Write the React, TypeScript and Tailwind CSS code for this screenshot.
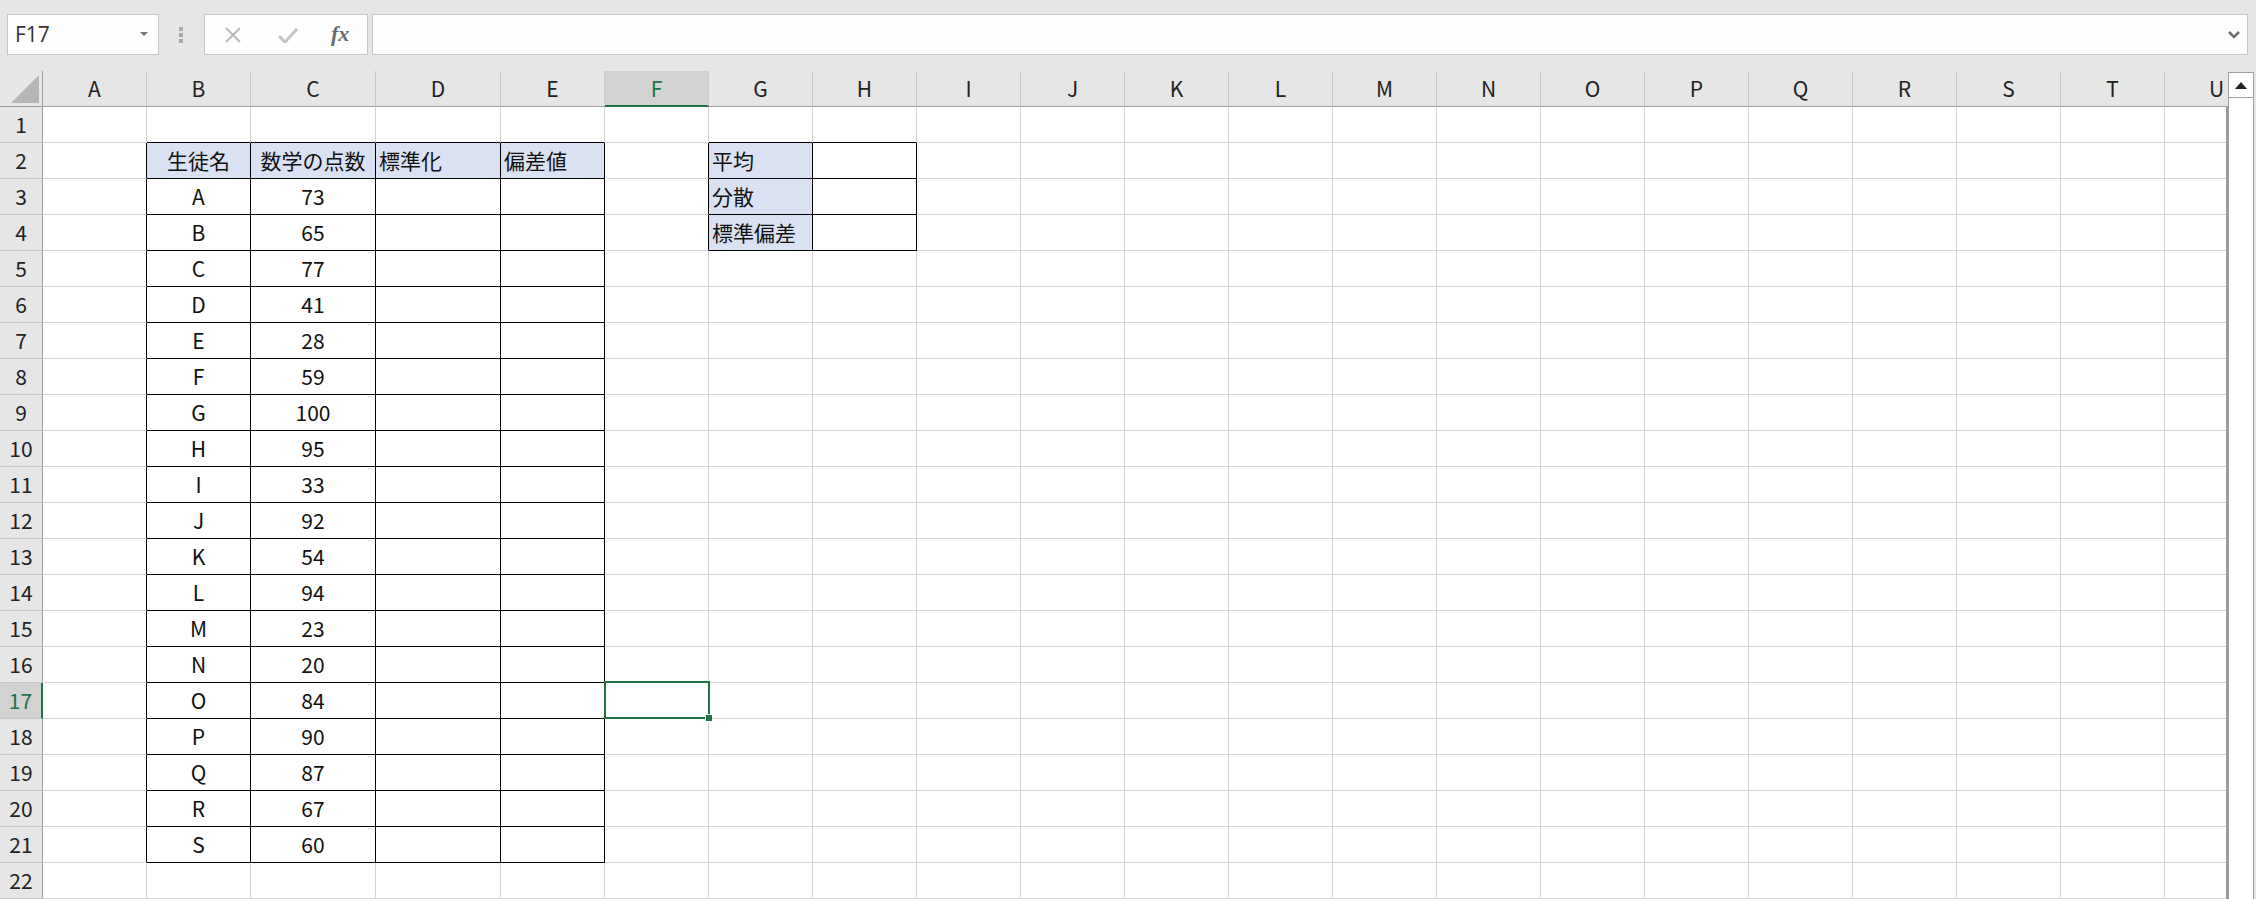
import React from 'react';

const COLS = ['A', 'B', 'C', 'D', 'E', 'F', 'G', 'H', 'I', 'J', 'K', 'L', 'M', 'N', 'O', 'P', 'Q', 'R', 'S', 'T', 'U'];
const WIDE = [2, 3]; // C, D
const SEL_COL = 5; // F
const SEL_ROW = 17;

const students = ['A', 'B', 'C', 'D', 'E', 'F', 'G', 'H', 'I', 'J', 'K', 'L', 'M', 'N', 'O', 'P', 'Q', 'R', 'S'];
const scores = [73, 65, 77, 41, 28, 59, 100, 95, 33, 92, 54, 94, 23, 20, 84, 90, 87, 67, 60];

type Cell = { text: string; align: 'left' | 'center'; fill?: boolean };

const cells: Record<string, Cell> = {
  '2-1': { text: '生徒名', align: 'center', fill: true },
  '2-2': { text: '数学の点数', align: 'center', fill: true },
  '2-3': { text: '標準化', align: 'left', fill: true },
  '2-4': { text: '偏差値', align: 'left', fill: true },
  '2-6': { text: '平均', align: 'left', fill: true },
  '3-6': { text: '分散', align: 'left', fill: true },
  '4-6': { text: '標準偏差', align: 'left', fill: true },
};
students.forEach((s, i) => {
  cells[`${i + 3}-1`] = { text: s, align: 'center' };
  cells[`${i + 3}-2`] = { text: String(scores[i]), align: 'center' };
});

const inTable = (r: number, c: number) =>
  (c >= 1 && c <= 4 && r >= 2 && r <= 21) || (c >= 6 && c <= 7 && r >= 2 && r <= 4);

const font = { fontFamily: '"Noto Sans CJK JP", "Noto Sans", sans-serif' };

function ColHeader() {
  return (
    <div className="flex h-[36px] w-[2228px] overflow-hidden bg-[#e6e6e6]">
      <div className="w-[43px] h-[36px] shrink-0 border-r border-b border-[#9f9f9f] bg-[#e6e6e6] flex items-end justify-end pr-[3px] pb-[3px]">
        <svg width="28" height="28" viewBox="0 0 28 28">
          <polygon points="28,0 28,28 0,28" fill="#b5b5b5" />
        </svg>
      </div>
      {COLS.map((c, i) => {
        const sel = i === SEL_COL;
        return (
          <div
            key={c}
            className={`${WIDE.includes(i) ? 'w-[125px]' : 'w-[104px]'} h-[36px] shrink-0 box-border border-r border-r-[#c8c8c8] flex items-center justify-center text-[21px] leading-none ${
              sel
                ? 'bg-[#d2d2d2] text-[#217346] border-b-2 border-b-[#217346]'
                : 'text-[#222] border-b border-b-[#9f9f9f]'
            }`}
          >
            {c}
          </div>
        );
      })}
    </div>
  );
}

function Row({ r }: { r: number }) {
  const selRow = r === SEL_ROW;
  return (
    <div className="flex h-[36px]">
      <div
        className={`w-[43px] h-[36px] shrink-0 border-b border-b-[#c8c8c8] flex items-center justify-center text-[21px] leading-none ${
          selRow
            ? 'bg-[#d2d2d2] text-[#217346] border-r-2 border-r-[#217346]'
            : 'bg-[#e6e6e6] text-[#222] border-r border-r-[#9f9f9f]'
        }`}
      >
        {r}
      </div>
      {COLS.map((c, i) => {
        const cell = cells[`${r}-${i}`];
        const rightBlack = inTable(r, i) || inTable(r, i + 1);
        const bottomBlack = inTable(r, i) || inTable(r + 1, i);
        const isSel = selRow && i === SEL_COL;
        return (
          <div
            key={c}
            className={`relative ${WIDE.includes(i) ? 'w-[125px]' : 'w-[104px]'} h-[36px] shrink-0 border-r border-b flex items-center text-[21px] leading-none text-[#111] whitespace-nowrap ${
              rightBlack ? 'border-r-black' : 'border-r-[#d4d4d4]'
            } ${bottomBlack ? 'border-b-black' : 'border-b-[#d4d4d4]'} ${
              cell?.fill ? 'bg-[#d9e1f2]' : 'bg-white'
            } ${cell?.align === 'left' ? 'justify-start pl-[3px]' : 'justify-center'}`}
          >
            {cell && <span>{cell.text}</span>}
            {isSel && (
              <div className="absolute -left-px -top-[2px] -right-[2px] -bottom-[1px] border-2 border-[#217346] z-10">
                <div className="absolute -right-[5px] -bottom-[5px] w-[8px] h-[8px] bg-[#217346] border border-white" />
              </div>
            )}
          </div>
        );
      })}
    </div>
  );
}

export default function App() {
  const rows = Array.from({ length: 22 }, (_, i) => i + 1);
  return (
    <div className="w-[2256px] h-[899px] overflow-hidden bg-[#e6e6e6] select-none" style={font}>
      {/* formula bar */}
      <div className="h-[71px] flex items-start pt-[14px] pl-[7px] pr-[8px]">
        <div className="w-[152px] h-[41px] bg-[#fefefe] border border-[#c6c6c6] flex items-center justify-between pl-[7px] pr-[10px]">
          <span className="text-[21px] text-[#333] leading-none" style={{ fontFamily: '"Open Sans", "Noto Sans", sans-serif' }}>
            F17
          </span>
          <svg width="8" height="5" viewBox="0 0 8 5">
            <polygon points="0,0 8,0 4,4" fill="#777" />
          </svg>
        </div>
        <div className="w-[45px] h-[41px] flex flex-col items-center justify-center gap-[2px] pr-[2px]">
          <div className="w-[4px] h-[4px] bg-[#a8a8a8]" />
          <div className="w-[4px] h-[4px] bg-[#a8a8a8]" />
          <div className="w-[4px] h-[4px] bg-[#a8a8a8]" />
        </div>
        <div className="w-[164px] h-[41px] bg-[#fefefe] border border-[#c6c6c6] flex items-center pl-[18px]">
          <svg width="18" height="16" viewBox="0 0 18 16" className="ml-[1px]">
            <path d="M2 1 L16 15 M16 1 L2 15" stroke="#b8b8b8" strokeWidth="1.8" fill="none" />
          </svg>
          <svg width="20" height="16" viewBox="0 0 20 16" className="ml-[36px]">
            <path d="M1 9 L7 15 L19 2" stroke="#c4c4c4" strokeWidth="3" fill="none" />
          </svg>
          <span
            className="ml-[33px] text-[22px] italic font-bold text-[#6a6a6a] leading-none pb-[2px]"
            style={{ fontFamily: '"Liberation Serif", "DejaVu Serif", serif' }}
          >
            fx
          </span>
        </div>
        <div className="ml-[4px] flex-1 h-[41px] bg-[#fefefe] border border-[#c6c6c6] flex items-center justify-end pr-[7px]">
          <svg width="12" height="8" viewBox="0 0 12 8">
            <path d="M1 1 L6 6 L11 1" stroke="#707070" strokeWidth="2.6" fill="none" />
          </svg>
        </div>
      </div>

      {/* sheet + scrollbar */}
      <div className="flex">
        <div className="w-[2228px] shrink-0">
          <ColHeader />
          <div className="w-[2228px] h-[792px] overflow-hidden border-r-2 border-[#9a9a9a] bg-white">
            {rows.map((r) => (
              <Row key={r} r={r} />
            ))}
          </div>
        </div>
        <div className="w-[26px] shrink-0 pt-[1px] flex flex-col">
          <div className="h-[26px] bg-white border border-[#a0a0a0] flex items-center justify-center">
            <svg width="12" height="7" viewBox="0 0 12 7">
              <polygon points="0,7 12,7 6,0" fill="#222" />
            </svg>
          </div>
          <div className="flex-1 h-[802px] bg-white border-x border-[#a0a0a0]" />
        </div>
      </div>
    </div>
  );
}
